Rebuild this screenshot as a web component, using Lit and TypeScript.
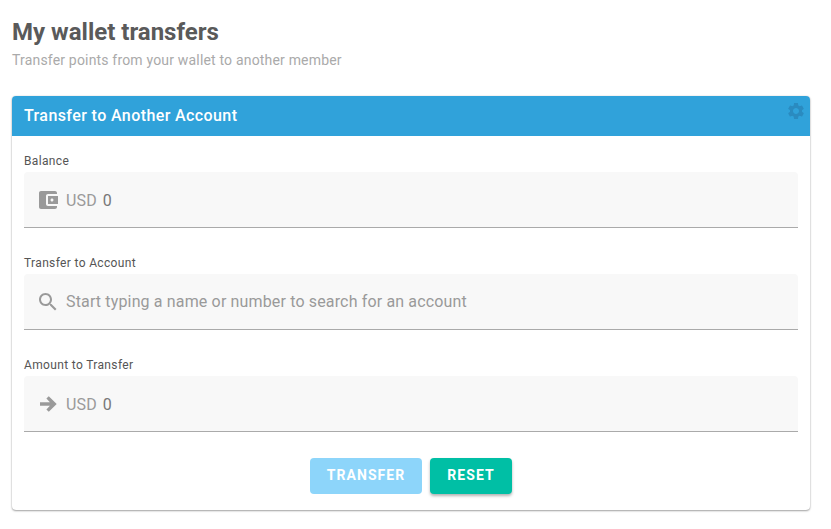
import { LitElement, html, css, svg } from "lit";
import { customElement } from "lit/decorators.js";

const walletIcon = svg`<path d="M21 18v1c0 1.1-.9 2-2 2H5c-1.11 0-2-.9-2-2V5c0-1.1.89-2 2-2h14c1.1 0 2 .9 2 2v1h-9c-1.11 0-2 .9-2 2v8c0 1.1.89 2 2 2h9zm-9-2h10V8H12v8zm4-2.5c-.83 0-1.5-.67-1.5-1.5s.67-1.5 1.5-1.5 1.5.67 1.5 1.5-.67 1.5-1.5 1.5z"/>`;
const searchIcon = svg`<path d="M15.5 14h-.79l-.28-.27C15.41 12.59 16 11.11 16 9.5 16 5.91 13.09 3 9.5 3S3 5.91 3 9.5 5.91 16 9.5 16c1.61 0 3.09-.59 4.23-1.57l.27.28v.79l5 4.99L20.49 19l-4.99-5zm-6 0C7.01 14 5 11.99 5 9.5S7.01 5 9.5 5 14 7.01 14 9.5 11.99 14 9.5 14z"/>`;
const arrowIcon = svg`<path d="M12.8 4.2 10.4 6.6 13.9 10.2H4v3.6h9.9l-3.5 3.6 2.4 2.4 7.9-7.8z"/>`;
const gearIcon = svg`<path d="M19.14 12.94c.04-.3.06-.61.06-.94 0-.32-.02-.64-.07-.94l2.03-1.58c.18-.14.23-.41.12-.61l-1.92-3.32c-.12-.22-.37-.29-.59-.22l-2.39.96c-.5-.38-1.03-.7-1.62-.94l-.36-2.54c-.04-.24-.24-.41-.48-.41h-3.84c-.24 0-.43.17-.47.41l-.36 2.54c-.59.24-1.13.57-1.62.94l-2.39-.96c-.22-.08-.47 0-.59.22L2.74 8.87c-.12.21-.08.47.12.61l2.03 1.58c-.05.3-.09.63-.09.94s.02.64.07.94l-2.03 1.58c-.18.14-.23.41-.12.61l1.92 3.32c.12.22.37.29.59.22l2.39-.96c.5.38 1.03.7 1.62.94l.36 2.54c.05.24.24.41.48.41h3.84c.24 0 .44-.17.47-.41l.36-2.54c.59-.24 1.13-.56 1.62-.94l2.39.96c.22.08.47 0 .59-.22l1.92-3.32c.12-.22.07-.47-.12-.61l-2.01-1.58zM12 15.6c-1.98 0-3.6-1.62-3.6-3.6s1.62-3.6 3.6-3.6 3.6 1.62 3.6 3.6-1.62 3.6-3.6 3.6z"/>`;

@customElement("app-root")
export class AppRoot extends LitElement {
    static styles = css`
        * {
            box-sizing: border-box;
        }

        :host {
            display: block;
            padding: 18px 21px 18px 12px;
            background: #fff;
            font-family: Roboto, "Liberation Sans", sans-serif;
            color: #555;
        }

        h1 {
            margin: 0;
            font-size: 24px;
            line-height: 28px;
            font-weight: 700;
            color: #5a5a5a;
        }

        .subtitle {
            margin: 4px 0 0;
            font-size: 14px;
            line-height: 20px;
            letter-spacing: 0.18px;
            color: #aaa;
        }

        .card {
            position: relative;
            margin-top: 26px;
            border-radius: 4px;
            background: #fff;
            box-shadow: 0 1px 2px rgba(0, 0, 0, 0.35), 0 0 2px rgba(0, 0, 0, 0.12);
        }

        .card-header {
            height: 40px;
            padding: 0 12px 2px;
            display: flex;
            align-items: center;
            border-radius: 4px 4px 0 0;
            background: #30a2da;
            color: #fff;
            font-size: 16px;
            font-weight: 500;
            letter-spacing: 0.4px;
        }

        .settings {
            position: absolute;
            top: 5px;
            right: 4px;
            width: 20px;
            height: 20px;
            fill: #2a8bc0;
        }

        .card-body {
            padding: 16px 12px 16px;
        }

        .field {
            margin-bottom: 26px;
        }

        .label {
            height: 20px;
            padding-top: 1px;
            font-size: 12px;
            line-height: 16px;
            letter-spacing: 0.35px;
            color: #555;
        }

        .input {
            height: 56px;
            padding: 0 12px;
            display: flex;
            align-items: center;
            gap: 6px;
            border-radius: 4px 4px 0 0;
            border-bottom: 1px solid #aaa;
            background: #f8f8f8;
            font-size: 16px;
            letter-spacing: 0.15px;
            color: #9a9a9a;
        }

        .input svg {
            width: 24px;
            height: 24px;
            flex: none;
            fill: #9a9a9a;
        }

        .amount {
            padding-top: 2px;
        }

        .value {
            color: #777;
        }

        .actions {
            display: flex;
            justify-content: center;
            gap: 8px;
        }

        button {
            height: 36px;
            padding: 0 0 2px;
            border: none;
            border-radius: 4px;
            font-family: inherit;
            font-size: 14px;
            font-weight: 700;
            letter-spacing: 1.05px;
            color: #fff;
        }

        .transfer {
            width: 112px;
            background: #8dd5fa;
        }

        .reset {
            width: 82px;
            background: #00bfa5;
            box-shadow: 0 2px 3px rgba(0, 0, 0, 0.3);
        }
    `;

    private _field(label: string, icon: unknown, content: unknown) {
        return html`
            <div class="field">
                <div class="label">${label}</div>
                <div class="input">
                    <svg viewBox="0 0 24 24">${icon}</svg>
                    ${content}
                </div>
            </div>
        `;
    }

    render() {
        const usd = html`<span class="amount">USD</span><span class="amount value">0</span>`;
        return html`
            <h1>My wallet transfers</h1>
            <p class="subtitle">Transfer points from your wallet to another member</p>
            <div class="card">
                <div class="card-header">Transfer to Another Account</div>
                <svg class="settings" viewBox="0 0 24 24">${gearIcon}</svg>
                <div class="card-body">
                    ${this._field("Balance", walletIcon, usd)}
                    ${this._field("Transfer to Account", searchIcon, html`<span>Start typing a name or number to search for an account</span>`)}
                    ${this._field("Amount to Transfer", arrowIcon, usd)}
                    <div class="actions">
                        <button class="transfer">TRANSFER</button>
                        <button class="reset">RESET</button>
                    </div>
                </div>
            </div>
        `;
    }
}
